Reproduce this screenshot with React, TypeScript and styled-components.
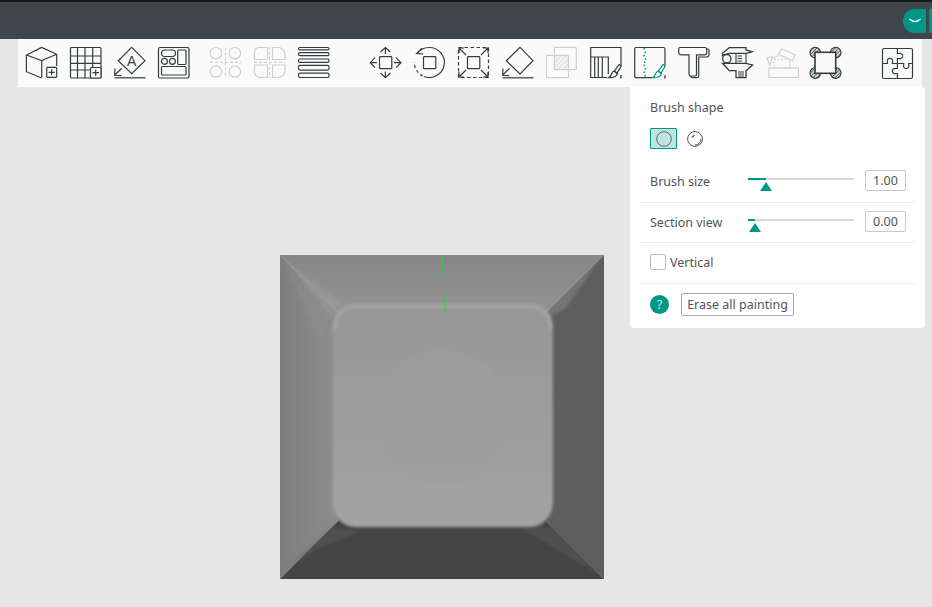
import React from 'react'
import styled, { createGlobalStyle } from 'styled-components'

const INK = '#333c3e'
const MUTED = '#cfcfcf'
const TEAL = '#009688'

const GlobalStyle = createGlobalStyle`
  html, body {
    margin: 0;
    padding: 0;
    height: 100%;
    overflow: hidden;
    background: #e6e6e6;
    font-family: "Noto Sans", "Liberation Sans", sans-serif;
  }
`

const Page = styled.div`
  width: 932px;
  height: 607px;
  display: flex;
  flex-direction: column;
`
const TopBar = styled.header`
  height: 39px;
  flex: none;
  display: flex;
  justify-content: flex-end;
  align-items: flex-start;
  gap: 3px;
  padding-top: 7px;
  box-sizing: border-box;
  background: #3e4649;
  border-top: 2px solid #15191a;
`
const CollapseButton = styled.div`
  width: 23px;
  height: 24px;
  display: flex;
  align-items: center;
  justify-content: center;
  background: ${TEAL};
  border-radius: 12px 0 0 12px;
`
const SideStrip = styled.div`
  width: 3px;
  height: 24px;
  background: ${TEAL};
`
const Toolbar = styled.nav`
  height: 48px;
  flex: none;
  margin: 0 10px 0 18px;
  padding: 8px;
  box-sizing: border-box;
  display: flex;
  align-items: flex-start;
  background: #fafafa;
`
const ToolGroup = styled.div<{ $gapAfter?: number }>`
  display: flex;
  gap: 12px;
  margin-right: ${({ $gapAfter }) => $gapAfter ?? 0}px;
`
const ToolSeparator = styled.div`
  width: 1px;
  height: 30px;
  margin: 1px 18px 0 22px;
  background: #8f9496;
`
const Icon = styled.svg<{ $muted?: boolean }>`
  width: 32px;
  height: 32px;
  flex: none;
  display: block;
  overflow: visible;
  fill: none;
  stroke: ${({ $muted }) => ($muted ? MUTED : INK)};
  stroke-width: 1.2;
`
const Stage = styled.main`
  flex: 1;
  position: relative;
  padding: 168px 0 0 280px;
`
const Panel = styled.aside`
  position: absolute;
  top: 0;
  left: 630px;
  width: 295px;
  height: 241px;
  box-sizing: border-box;
  padding: 0 10px;
  background: #fff;
  border-radius: 0 4px 4px 4px;
  color: #505557;
  font-size: 12.5px;
`
const ShapeSection = styled.section`
  height: 72px;
  padding: 12px 10px 0;
  box-sizing: border-box;
`
const Label = styled.div`
  line-height: 17px;
`
const ShapeRow = styled.div`
  display: flex;
  align-items: center;
  gap: 10px;
  margin-top: 12px;
`
const ShapeButton = styled.div<{ $active?: boolean }>`
  width: 27px;
  height: 21px;
  box-sizing: border-box;
  display: flex;
  align-items: center;
  justify-content: center;
  border: 1px solid ${({ $active }) => ($active ? TEAL : 'transparent')};
  border-radius: 1px;
  background: ${({ $active }) => ($active ? '#bfe5e1' : 'transparent')};
`
const ShapePreview = styled.svg`
  display: block;
  width: 16px;
  height: 16px;
  fill: none;
`
const SliderRow = styled.div<{ $height: number; $lift?: number }>`
  height: ${({ $height }) => $height}px;
  box-sizing: border-box;
  padding: 0 9px ${({ $lift }) => $lift ?? 0}px 10px;
  display: flex;
  align-items: center;
  border-bottom: 1px solid #ececec;
`
const SliderLabel = styled.div`
  width: 98px;
  margin-top: 1px;
`
const SliderTrack = styled.div`
  position: relative;
  width: 106px;
  height: 2px;
  margin: -3px 11px 0 0;
  background: #d9d9d9;
`
const SliderFill = styled.div`
  height: 100%;
  background: ${TEAL};
`
const SliderThumb = styled.div`
  position: absolute;
  top: 4px;
  width: 0;
  height: 0;
  margin-left: -6px;
  border-left: 6px solid transparent;
  border-right: 6px solid transparent;
  border-bottom: 9px solid ${TEAL};
`
const ValueBox = styled.div`
  width: 41px;
  height: 21px;
  box-sizing: border-box;
  border: 1px solid #c9c9c9;
  border-radius: 2px;
  text-align: center;
  line-height: 19px;
`
const CheckRow = styled.label`
  height: 41px;
  box-sizing: border-box;
  padding: 0 10px 2px;
  display: flex;
  align-items: center;
  gap: 4px;
  border-bottom: 1px solid #ececec;
`
const CheckBox = styled.span`
  width: 16px;
  height: 16px;
  box-sizing: border-box;
  border: 1px solid #b9b9b9;
  border-radius: 2px;
  background: #fff;
`
const FooterRow = styled.div`
  height: 44px;
  padding: 0 10px 3px;
  box-sizing: border-box;
  display: flex;
  align-items: center;
  gap: 12px;
`
const HelpBadge = styled.div`
  width: 19px;
  height: 19px;
  border-radius: 50%;
  background: ${TEAL};
  color: #c9ebe7;
  font-size: 13px;
  line-height: 19px;
  text-align: center;
`
const EraseButton = styled.button`
  width: 113px;
  height: 23px;
  padding: 0;
  box-sizing: border-box;
  border: 1px solid #a9a9a9;
  border-radius: 2px;
  background: #fff;
  color: #505557;
  font: inherit;
`
const GlyphText = styled.text`
  fill: ${INK};
  stroke: none;
  font-size: 14px;
  font-family: "Liberation Sans", sans-serif;
`
const ModelSvg = styled.svg`
  display: block;
  width: 324px;
  height: 324px;
`

const Brush = ({ color = INK }: { color?: string }) => (
  <g stroke={color}>
    <path d="M29 17.500 31.300 19 27 26 24.500 24Z" fill="#fafafa" />
    <path d="M24 24 27.500 27C26 30 23 31 18.500 30.700 20.500 29.500 21 28.500 21.500 27 22 25.500 22.500 24.500 24 24Z" fill="#fafafa" />
  </g>
)

const ArrowDown = () => (
  <path d="M7.700 21.300.8 28M1 21.500.6 28.300 7.300 28.700" />
)

const CubeIcon = () => (
  <Icon viewBox="0 0 32 32">
    <path d="M15.700.4 30.700 7.300V19M15.700.4.400 8v16.700L15.700 31M.4 8l15.300 5.500 15-6.200M15.700 13.500V30" />
    <rect x="20.700" y="20.300" width="10" height="10" rx="1" fill="#fafafa" />
    <path d="M25.700 22.300v6M22.700 25.300h6" />
  </Icon>
)
const GridIcon = () => (
  <Icon viewBox="0 0 32 32">
    <rect x=".5" y=".5" width="30.500" height="30.500" rx="1" />
    <path d="M7.500 1v30M15 1v30M22.700 1v20M1 9h30M1 16.300h30M1 23h19" />
    <rect x="20.500" y="20.500" width="10.500" height="10.500" rx="1" fill="#fafafa" />
    <path d="M25.700 22.500v6.500M22.500 25.700h6.500" />
  </Icon>
)
const PaintTextIcon = () => (
  <Icon viewBox="0 0 32 32">
    <path d="M17.700.4 31 13.700 17.700 26.700 4.300 13.700Z" />
    <GlyphText x="12.900" y="18.800">A</GlyphText>
    <ArrowDown />
    <path d="M.5 30.800H31.500" />
  </Icon>
)
const LayoutIcon = () => (
  <Icon viewBox="0 0 32 32">
    <rect x=".5" y=".5" width="30.500" height="30.500" rx="1.500" />
    <rect x="3.500" y="3" width="14" height="6.500" rx="3.200" />
    <rect x="19.700" y="3" width="8.300" height="14.500" rx="1" />
    <circle cx="6.400" cy="14.300" r="3" />
    <circle cx="14.400" cy="14.300" r="3" />
    <rect x="3.500" y="19.500" width="24.500" height="8.500" rx="1" />
  </Icon>
)
const CirclesIcon = () => (
  <Icon viewBox="0 0 32 32" $muted>
    <circle cx="5.900" cy="6.200" r="5.700" />
    <circle cx="24.900" cy="6.200" r="5.700" />
    <circle cx="5.900" cy="24.500" r="5.700" />
    <circle cx="24.900" cy="24.500" r="5.700" />
    <path d="M15.500.5v30M0 15.300h31" strokeDasharray="3 2" />
  </Icon>
)
const QuadsIcon = () => (
  <Icon viewBox="0 0 32 32" $muted>
    <path d="M13.500.5V12.500H.5V5C.5 2.500 2.500.5 5 .5Z" />
    <path d="M18.500.5H24C28 .5 31 3.500 31 8V12.500H18.500Z" />
    <path d="M13.500 18V30.500H6C3 30.500.5 28 .5 25V18Z" />
    <path d="M18.500 18H31V23C31 27.500 28 30.500 24 30.500H18.500Z" />
    <path d="M15.500 0v31M0 15.300h31" strokeDasharray="3 2" />
  </Icon>
)
const LinesIcon = () => (
  <Icon viewBox="0 0 32 32">
    <rect x=".5" y=".5" width="30.500" height="2.400" rx="1.200" />
    <rect x=".5" y="5.700" width="30.500" height="3" rx="1.500" />
    <rect x=".5" y="12" width="30.500" height="3.400" rx="1.500" />
    <rect x=".5" y="18.300" width="30.500" height="4.800" rx="1.500" />
    <rect x=".5" y="26.200" width="30.500" height="4.300" rx="1.500" />
  </Icon>
)
const MoveIcon = () => (
  <Icon viewBox="0 0 32 32">
    <rect x="9.500" y="9.700" width="12.300" height="12" rx=".8" />
    <path d="M15.400.5V7M10.500 5 15.400.5 20.300 5M15.400 24.500V30.500M10.500 26 15.400 30.700 20.300 26M.5 15.700H7M5 10.700.3 15.700 5 20.700M24 15.700H30.500M26 10.700 31 15.700 26 20.700" />
  </Icon>
)
const RotateIcon = () => (
  <Icon viewBox="0 0 32 32">
    <rect x="9.500" y="9.700" width="12.300" height="12" rx=".8" />
    <path d="M3 6.300C6 2.500 10 .5 15.300.5A15 15 0 1 1 10 29.500" />
    <path d="M8.700 29A15 15 0 0 1 .4 15.300" strokeDasharray="3 2.500" />
    <path d="M8 1.200 2.700 6.400 9.200 7" />
  </Icon>
)
const ScaleIcon = () => (
  <Icon viewBox="0 0 32 32">
    <rect x=".5" y=".5" width="30" height="30" strokeDasharray="3.500 2.500" />
    <rect x="9.500" y="9.700" width="12.300" height="12" rx=".8" />
    <path d="M1 1 8 8M30 1 23 8M1 30 8 23M30 30 23 23M1 6V1H6M25 1H30V6M1 25V30H6M25 30H30V25" />
  </Icon>
)
const FlattenIcon = () => (
  <Icon viewBox="0 0 32 32">
    <path d="M18 .4 31 13.700 18 27 4.300 13.700Z" />
    <ArrowDown />
    <path d="M.5 30.800H31.500" />
  </Icon>
)
const BooleanIcon = () => (
  <Icon viewBox="0 0 32 32" $muted>
    <rect x="8.300" y="8.300" width="14" height="14.400" fill="#e6e6e6" stroke="none" />
    <path d="M8.500 13 13 8.500M8.500 18 18 8.500M9 22.500 22 9.500M14 22.500 22 14.500M19 22.500 22 19.500" stroke="#f7f7f7" />
    <rect x=".5" y="8.300" width="22" height="22.400" rx="1" />
    <rect x="8.300" y=".4" width="22" height="22.300" rx="1" />
  </Icon>
)
const SupportPaintIcon = () => (
  <Icon viewBox="0 0 32 32">
    <path d="M.7 30.700V.5H31V18M.7 10H18.300V27M4.700 10V30.700M8.300 10V30.700M12.300 10V30.700M.7 30.500H17M30 31h1V28" />
    <Brush />
  </Icon>
)
const SeamPaintIcon = () => (
  <Icon viewBox="0 0 32 32">
    <path d="M18 30.700H2C1.200 30.700.7 30.200.7 29.500V2C.7 1.200 1.200.5 2 .5H29.500C30.300.5 31 1.200 31 2V18M30 31h1V28" />
    <path d="M10 1 11.500 6 10 9 12 13 9.500 17 11.500 22 10 26 11.500 30" stroke={TEAL} strokeWidth="1.600" strokeDasharray="1.500 2.200" />
    <Brush color={TEAL} />
  </Icon>
)
const TextIcon = () => (
  <Icon viewBox="0 0 32 32">
    <path d="M2 .5H27C28.500 .5 28.700 1.500 28.700 2.500V6C28.700 7.500 27.500 7.800 26.500 7.800H18.500V27.500C18.500 28.500 18 29 17 29H12.500C11.500 29 11 28.500 11 27.500V7.800H3C1.500 7.800.7 6.500.7 5V2C.7 1 1 .5 2 .5Z" />
    <path d="M28.700 2H30C30.700 2 31 2.500 31 3.500V7.500C31 9 30 10 28.500 10H20.700V29C20.700 30.200 20 30.700 19 30.700H14.500C13.500 30.700 12.800 30 12.500 29" />
  </Icon>
)
const CaliperIcon = () => (
  <Icon viewBox="0 0 32 32">
    <path d="M.5 6.300 7.300.7H24V3L30 4.700 24.700 6.300H7L.5 8.300Z" strokeWidth="1.300" />
    <path d="M.5 16.300H24L30.600 18 24 23.700V30.700H14V23.700H7.300Z" strokeWidth="1.300" />
    <circle cx="4.800" cy="11.700" r="4.200" strokeWidth="1.300" />
    <path d="M14 6.500V16.300M24 6.500V16.300M15.500 9H20M15.500 11.500H20M15.500 14H20M16 25H22M16 27H22M16 29H22" strokeWidth="1.100" />
  </Icon>
)
const AssemblyIcon = () => (
  <Icon viewBox="0 0 32 32" $muted>
    <rect x="3" y="21" width="29.500" height="9.500" />
    <rect x="8" y="12.500" width="16" height="8.500" strokeDasharray="2 1.500" />
    <path d="M15.700 1.700 29 8 26.300 13.700 12.300 7.300ZM1 11 6.500 9.500 3.800 18.500Z" />
    <path d="M6.300 12 12 8.500" />
  </Icon>
)
const BrimIcon = () => (
  <Icon viewBox="0 0 32 32">
    <defs>
      <pattern id="brim-hatch" width="2.600" height="2.600" patternUnits="userSpaceOnUse" patternTransform="rotate(45)">
        <rect width="2.600" height="2.600" fill="#d8d8d8" stroke="none" />
        <path d="M0 0V2.600" stroke={INK} strokeWidth="1.300" />
      </pattern>
    </defs>
    <circle cx="5.300" cy="5.600" r="5.300" fill="url(#brim-hatch)" />
    <circle cx="25.700" cy="5.600" r="5.300" fill="url(#brim-hatch)" />
    <circle cx="5.300" cy="26" r="5.300" fill="url(#brim-hatch)" />
    <circle cx="25.700" cy="26" r="5.300" fill="url(#brim-hatch)" />
    <rect x="5" y="5.300" width="20.700" height="21" fill="#fafafa" strokeWidth="1.600" />
  </Icon>
)
const PuzzleIcon = () => (
  <Icon viewBox="0 0 32 32">
    <rect x=".5" y="1.500" width="30" height="30" rx="1.500" />
    <path d="M15.400 2V6.500H17A2.700 2.700 0 1 1 17 11.500H15.400V16.500H21.700V18A2.700 2.700 0 1 0 26.700 18V16.500H31" />
    <path d="M1 16.500H5.500V15A2.700 2.700 0 1 1 10.500 15V16.500H15.400V21.500H14A2.700 2.700 0 1 0 14 26.500H15.400V31" />
  </Icon>
)

function Model() {
  return (
    <ModelSvg viewBox="0 0 324 324">
      <defs>
        <linearGradient id="side-top" x1="0" y1="0" x2="0" y2="1">
          <stop offset="0" stopColor="#868686" />
          <stop offset=".32" stopColor="#929292" />
        </linearGradient>
        <linearGradient id="side-left" x1="0" y1="0" x2="1" y2="0">
          <stop offset="0" stopColor="#7e7e7e" />
          <stop offset=".35" stopColor="#8c8c8c" />
        </linearGradient>
        <linearGradient id="cap" x1="0" y1="0" x2="0" y2="1">
          <stop offset="0" stopColor="#969696" />
          <stop offset="1" stopColor="#a3a3a3" />
        </linearGradient>
        <filter id="soft-1" x="-10%" y="-10%" width="120%" height="120%">
          <feGaussianBlur stdDeviation="1.400" />
        </filter>
      </defs>
      <path d="M0 0H324L162 162Z" fill="url(#side-top)" />
      <path d="M0 0 162 162 0 324Z" fill="url(#side-left)" />
      <path d="M324 0V324L162 162Z" fill="#5e5e5e" />
      <path d="M0 324 162 162 324 324Z" fill="#444" />
      <path d="M8 312 52 272 82 276 38 294Z" fill="#5c5c5c" opacity=".5" filter="url(#soft-1)" />
      <path d="M318 318 272 272 240 272 296 306Z" fill="#565656" opacity=".7" filter="url(#soft-1)" />
      <path d="M320 4 272 50 258 68 285 54Z" fill="#8b8b8b" opacity=".5" filter="url(#soft-1)" />
      <path d="M5 5 50 62 62 48Z" fill="#9c9c9c" opacity=".55" filter="url(#soft-1)" />
      <path d="M4 8 40 90 50 62Z" fill="#939393" opacity=".4" filter="url(#soft-1)" />
      <rect x="54" y="60" width="218" height="214" rx="24" fill="#4c4c4c" filter="url(#soft-1)" />
      <rect x="52" y="48" width="221" height="224" rx="24" fill="url(#cap)" filter="url(#soft-1)" />
      <path d="M55 74Q55 51 78 51H248Q270 51 270 74" fill="none" stroke="#a9a9a9" strokeWidth="2.500" filter="url(#soft-1)" />
      <path d="M56 78V250" fill="none" stroke="#a0a0a0" strokeWidth="2" filter="url(#soft-1)" />
      <circle cx="162" cy="162" r="68" fill="#9d9d9d" opacity=".5" />
      <path d="M162 0 165 59" stroke="#43c24a" strokeWidth="1" fill="none" />
    </ModelSvg>
  )
}

function Slider({ percent }: { percent: number }) {
  return (
    <SliderTrack>
      <SliderFill style={{ width: `${percent}%` }} />
      <SliderThumb style={{ left: `${percent}%` }} />
    </SliderTrack>
  )
}

export default function App() {
  return (
    <Page>
      <GlobalStyle />
      <TopBar>
        <CollapseButton>
          <svg width="12" height="6" viewBox="0 0 12 6" fill="none" stroke="#fff" strokeWidth="1.400">
            <path d="M.5 1Q6 6 11.500 1" />
          </svg>
        </CollapseButton>
        <SideStrip />
      </TopBar>
      <Toolbar>
        <ToolGroup $gapAfter={20}>
          <CubeIcon />
          <GridIcon />
          <PaintTextIcon />
          <LayoutIcon />
        </ToolGroup>
        <ToolGroup>
          <CirclesIcon />
          <QuadsIcon />
          <LinesIcon />
        </ToolGroup>
        <ToolSeparator />
        <ToolGroup>
          <MoveIcon />
          <RotateIcon />
          <ScaleIcon />
          <FlattenIcon />
          <BooleanIcon />
          <SupportPaintIcon />
          <SeamPaintIcon />
          <TextIcon />
          <CaliperIcon />
          <AssemblyIcon />
          <BrimIcon />
        </ToolGroup>
        <ToolSeparator />
        <PuzzleIcon />
      </Toolbar>
      <Stage>
        <Model />
        <Panel>
          <ShapeSection>
            <Label>Brush shape</Label>
            <ShapeRow>
              <ShapeButton $active>
                <ShapePreview viewBox="0 0 16 16" stroke="#5f6a6b">
                  <circle cx="8" cy="8" r="7.300" />
                </ShapePreview>
              </ShapeButton>
              <ShapePreview viewBox="0 0 16 16" stroke="#555">
                <circle cx="8" cy="8" r="7.400" />
                <path d="M8 14A6 6 0 0 0 14 8" />
                <path d="M5 6.500 7.500 4" strokeWidth="1.400" />
              </ShapePreview>
            </ShapeRow>
          </ShapeSection>
          <SliderRow $height={44}>
            <SliderLabel>Brush size</SliderLabel>
            <Slider percent={17} />
            <ValueBox>1.00</ValueBox>
          </SliderRow>
          <SliderRow $height={40} $lift={2}>
            <SliderLabel>Section view</SliderLabel>
            <Slider percent={7} />
            <ValueBox>0.00</ValueBox>
          </SliderRow>
          <CheckRow>
            <CheckBox />
            Vertical
          </CheckRow>
          <FooterRow>
            <HelpBadge>?</HelpBadge>
            <EraseButton>Erase all painting</EraseButton>
          </FooterRow>
        </Panel>
      </Stage>
    </Page>
  )
}
